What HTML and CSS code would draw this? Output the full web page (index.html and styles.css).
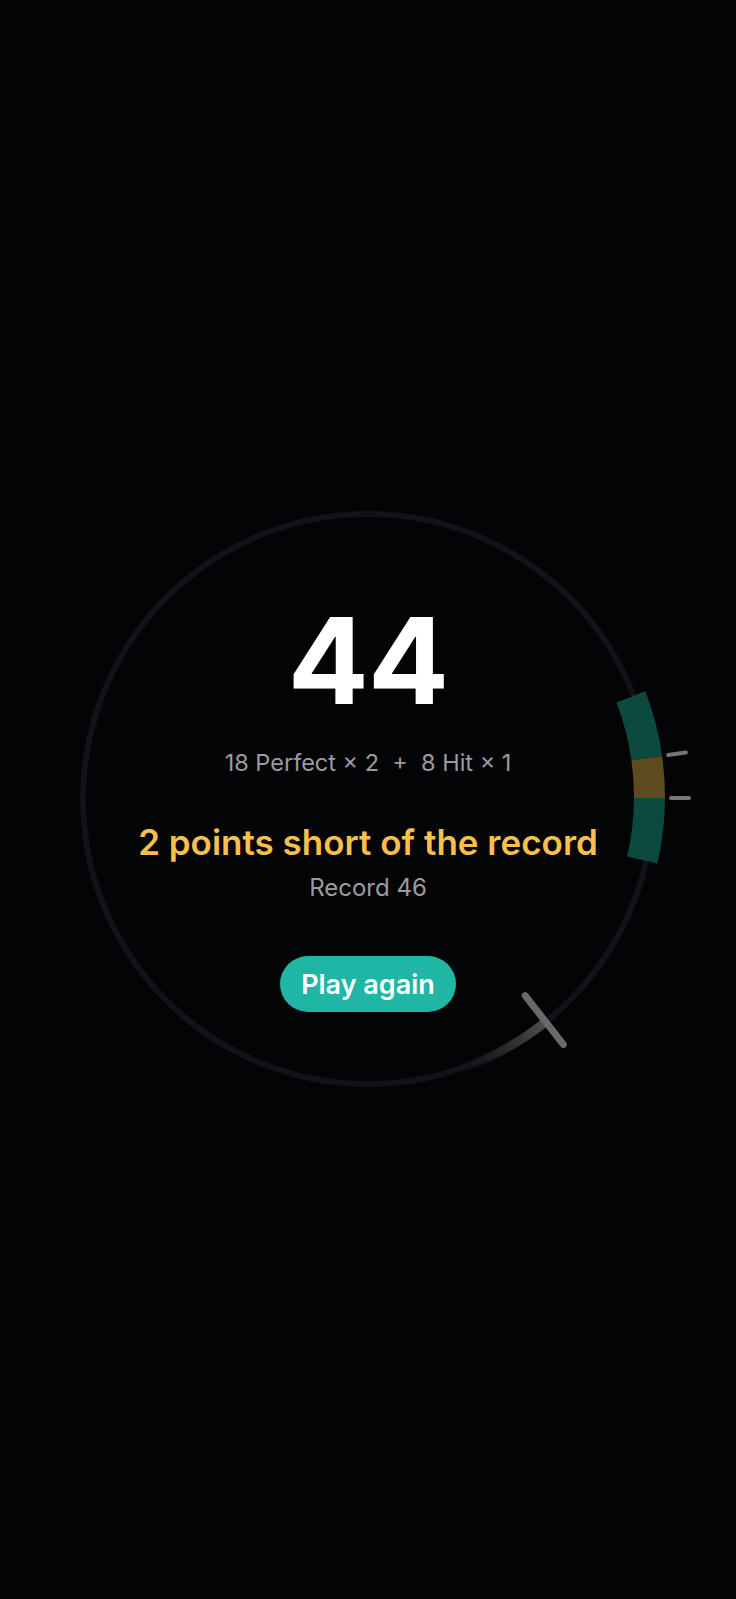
FILE: index.html
```html
<!DOCTYPE html>
<html lang="en">
<head>
    <meta charset="UTF-8">
    <meta name="viewport" content="width=device-width, initial-scale=1.0">
    <title>Timing Dial - Result</title>
    <link rel="stylesheet" href="styles.css">
</head>
<body>
    <div class="screen">
        <!-- dial drawn under the result text -->
        <svg class="dial" viewBox="0 0 736 1599" width="736" height="1599">
            <defs>
                <linearGradient id="trail" gradientUnits="userSpaceOnUse" x1="547" y1="1020" x2="456" y2="1070">
                    <stop offset="0" stop-color="#58585b" stop-opacity="0.95"/>
                    <stop offset="0.5" stop-color="#323235" stop-opacity="0.7"/>
                    <stop offset="1" stop-color="#1a1b1e" stop-opacity="0"/>
                </linearGradient>
            </defs>
            <circle class="ring" cx="368" cy="799" r="285"/>

            <!-- hit zone / perfect zone -->
            <path class="zone-hit" d="M 645.4 691.3 A 295 295 0 0 1 662.1 755.9 L 631.4 760.3 A 264 264 0 0 0 616.5 702.4 Z"/>
            <path class="zone-perfect" d="M 662.1 755.9 A 295 295 0 0 1 665 798 L 634 798 A 264 264 0 0 0 631.4 760.3 Z"/>
            <path class="zone-hit" d="M 665 798 A 295 295 0 0 1 657.4 863.4 L 627.2 856.4 A 264 264 0 0 0 634 798 Z"/>

            <line class="tick" x1="668.1" y1="755.1" x2="685.9" y2="752.6"/>
            <line class="tick" x1="671" y1="798" x2="689" y2="798"/>

            <!-- needle with its fading trail -->
            <path class="trail" d="M 547.4 1020.5 A 285 285 0 0 1 456.1 1070.1"/>
            <line class="needle" x1="525.2" y1="995.6" x2="563.3" y2="1044.4"/>
        </svg>

        <main class="result">
            <div class="score">44</div>
            <div class="breakdown">18 Perfect × 2  +  8 Hit × 1</div>
            <div class="verdict">2 points short of the record</div>
            <div class="record">Record 46</div>
            <button class="again" type="button">Play again</button>
        </main>
    </div>
</body>
</html>
```

FILE: styles.css
```css
body {
    margin: 0;
    background-color: #030406;
    font-family: 'Inter', 'Noto Sans', sans-serif;
}
.screen {
    position: relative;
    width: 736px;
    height: 1599px;
    overflow: hidden;
}
.dial {
    position: absolute;
    top: 0;
    left: 0;
}
.ring {
    fill: none;
    stroke: #121316;
    stroke-width: 6;
}
.zone-hit {
    fill: #0c4a40;
}
.zone-perfect {
    fill: #5e4a20;
}
.tick {
    stroke: #767678;
    stroke-width: 4;
    stroke-linecap: round;
}
.trail {
    fill: none;
    stroke: url(#trail);
    stroke-width: 9;
}
.needle {
    stroke: #69696b;
    stroke-width: 7;
    stroke-linecap: round;
}
.result {
    position: relative;
    display: flex;
    flex-direction: column;
    align-items: center;
    padding-top: 601px;
    text-align: center;
}
.score {
    font-size: 120px;
    line-height: 120px;
    font-weight: 700;
    color: #ffffff;
    letter-spacing: -1px;
}
.breakdown {
    margin-top: 28px;
    font-size: 23.5px;
    line-height: 28px;
    color: #9c9ca0;
    white-space: pre;
}
.verdict {
    margin-top: 45px;
    font-size: 35px;
    line-height: 40px;
    font-weight: 600;
    color: #f7bf4b;
}
.record {
    margin-top: 12px;
    font-size: 24px;
    line-height: 28px;
    color: #9c9ca0;
}
.again {
    margin-top: 54px;
    height: 56px;
    padding: 0 21px;
    border: none;
    border-radius: 28px;
    background-color: #1fb6a5;
    color: #ffffff;
    font-family: inherit;
    font-size: 27px;
    font-weight: 600;
    cursor: pointer;
}
```
